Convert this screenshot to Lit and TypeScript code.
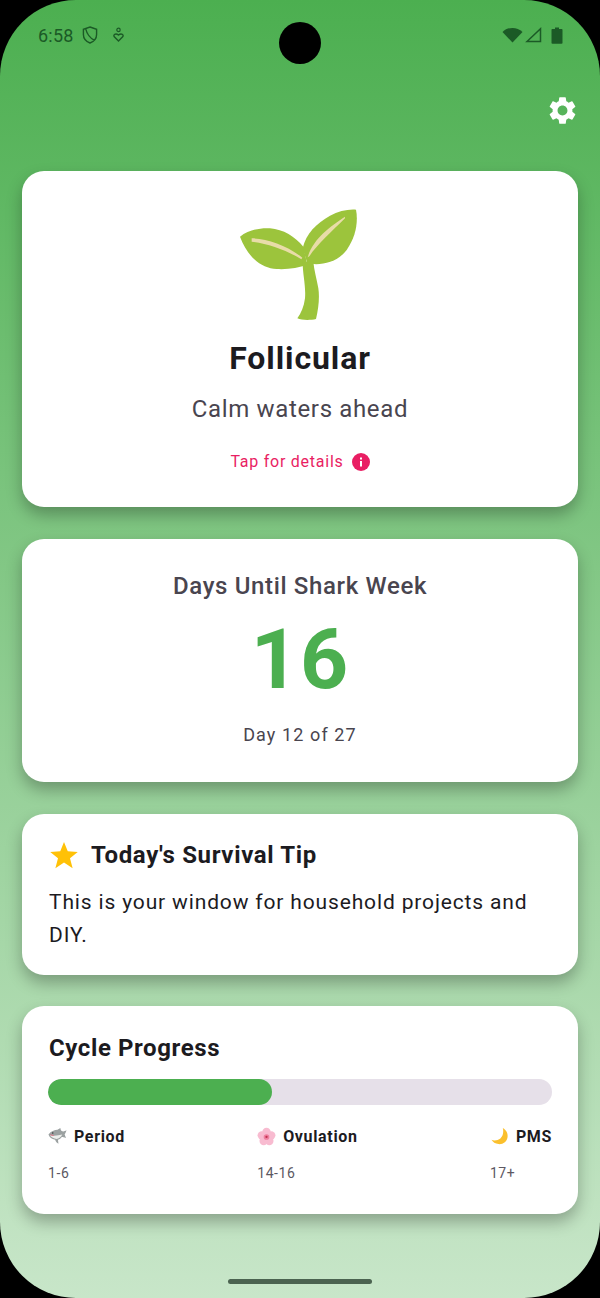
import { LitElement, css, html } from "lit";
import { customElement } from "lit/decorators.js";

const seedling = html`<svg class="seedling" viewBox="57 39 360 336" aria-hidden="true">
  <path fill="#9cc43c" d="M60 125 C85 105 120 98 150 100 C190 103 225 125 250 155 L262 210 C235 218 205 224 170 222 C125 220 85 190 60 125 Z"/>
  <path fill="#9cc43c" d="M248 160 C258 115 290 85 330 62 C355 48 385 42 408 44 C415 80 408 125 380 165 C350 205 300 212 262 205 Z"/>
  <path fill="#9cc43c" d="M248 200 C248 240 258 270 255 310 C252 335 243 355 232 370 C245 376 272 376 288 372 C296 340 299 305 295 280 C290 250 282 225 280 200 Z"/>
  <path fill="#e8dca8" d="M95 130 C140 130 200 150 247 188 L244 193 C200 165 140 145 95 140 Z"/>
  <path fill="#e8dca8" d="M375 65 C330 95 280 130 263 187 L268 184 C290 150 335 110 375 70 Z"/>
</svg>`;

const gear = html`<svg class="gear" viewBox="0 0 24 24" aria-hidden="true">
  <path fill="#fff" d="M19.14 12.94c.04-.3.06-.61.06-.94 0-.32-.02-.64-.07-.94l2.03-1.58a.49.49 0 0 0 .12-.61l-1.92-3.32a.488.488 0 0 0-.59-.22l-2.39.96c-.5-.38-1.03-.7-1.62-.94l-.36-2.54a.484.484 0 0 0-.48-.41h-3.84c-.24 0-.43.17-.47.41l-.36 2.54c-.59.24-1.13.57-1.62.94l-2.39-.96c-.22-.08-.47 0-.59.22L2.74 8.87c-.12.21-.08.47.12.61l2.03 1.58c-.05.3-.09.63-.09.94s.02.64.07.94l-2.03 1.58a.49.49 0 0 0-.12.61l1.92 3.32c.12.22.37.29.59.22l2.39-.96c.5.38 1.03.7 1.62.94l.36 2.54c.05.24.24.41.48.41h3.84c.24 0 .44-.17.47-.41l.36-2.54c.59-.24 1.13-.56 1.62-.94l2.39.96c.22.08.47 0 .59-.22l1.92-3.32c.12-.22.07-.47-.12-.61l-2.01-1.58zM12 15.6c-1.98 0-3.6-1.62-3.6-3.6s1.62-3.6 3.6-3.6 3.6 1.62 3.6 3.6-1.62 3.6-3.6 3.6z"/>
</svg>`;

const shark = html`<svg class="emoji" viewBox="0 0 20 18" aria-hidden="true">
  <path fill="#9ba1a1" d="M0.500 7 C3 3.500 7 2 10 2 L13 0 C13 1.200 13.500 2.200 14 3 C15.500 3.800 17 4 19.500 2.500 C19 4.500 18 6 17.500 7 C18 8.500 18.500 9.500 19 10.500 C17 10 15.500 9.500 14.500 9.500 C13 11.500 11.500 12.300 10.500 12.500 L11 16.500 C9.500 16 8 14.500 7.500 12.500 C4 12 1.500 10 0.500 7 Z"/>
  <path fill="#eceeec" d="M2 7.800 C6 8.500 11 8.200 15 7 C14 9.500 11.500 11.500 9 11.500 C6.500 11.500 3.500 10 2 7.800 Z"/>
  <circle cx="5" cy="5.200" r=".8" fill="#333"/>
  <path fill="none" stroke="#df6d80" stroke-width="1" d="M2.500 7.200 L6 8"/>
</svg>`;

const blossom = html`<svg class="emoji" viewBox="0 0 20 20" aria-hidden="true">
  <g fill="#f8bbd0">
    <circle cx="10" cy="5.200" r="4.400"/>
    <circle cx="15" cy="8.800" r="4.400"/>
    <circle cx="13" cy="14.800" r="4.400"/>
    <circle cx="7" cy="14.800" r="4.400"/>
    <circle cx="5" cy="8.800" r="4.400"/>
  </g>
  <circle cx="10" cy="10.500" r="3" fill="#ee7f9f"/>
  <circle cx="10" cy="10.500" r="1.200" fill="#c2314f"/>
</svg>`;

const moon = html`<svg class="emoji" viewBox="0 0 20 20" aria-hidden="true">
  <path fill="#fbc02d" d="M13.500 1 C17 3 19 6.500 18.500 10.500 C18 15.500 13.500 18.500 9 18 C5.500 17.600 3 16 1.500 13.500 C3 14.200 5.500 14.500 8 13.700 C12.500 12.200 15 7 13.500 1 Z"/>
</svg>`;

@customElement("app-root")
export class AppRoot extends LitElement {
  static styles = css`
    :host {
      display: block;
      width: 600px;
      height: 1298px;
      background: #000;
      font-family: Roboto, "Noto Sans", sans-serif;
      color: #1c1b1f;
    }
    .screen {
      position: relative;
      box-sizing: border-box;
      height: 100%;
      border-radius: 76px;
      overflow: hidden;
      background: linear-gradient(#4caf50 0%, #c8e6c9 100%);
      padding: 0 22px;
    }
    .camera {
      position: absolute;
      left: 279px;
      top: 22px;
      width: 42px;
      height: 42px;
      border-radius: 50%;
      background: #000;
    }
    .status {
      height: 70px;
      display: flex;
      align-items: center;
      justify-content: space-between;
      padding: 0 15px 0 16px;
      color: #1b5a26;
    }
    .status-left,
    .status-right {
      display: flex;
      align-items: center;
    }
    .time {
      font-size: 18px;
      letter-spacing: 0.2px;
      margin-right: 8px;
    }
    .status svg {
      display: block;
    }
    .toolbar {
      height: 101px;
      display: flex;
      justify-content: flex-end;
    }
    .gear {
      width: 33px;
      height: 33px;
      margin: 24px -1px 0 0;
    }
    .cards {
      display: flex;
      flex-direction: column;
      gap: 32px;
    }
    .card {
      box-sizing: border-box;
      background: #fff;
      border-radius: 22px;
      box-shadow: 0 8px 16px rgba(0, 0, 0, 0.28);
    }
    .phase {
      height: 336px;
      display: flex;
      flex-direction: column;
      align-items: center;
      padding-top: 37px;
    }
    .seedling {
      display: block;
      width: 120px;
      height: 112px;
      margin-left: -2px;
    }
    .phase-name {
      margin-top: 18px;
      font-size: 32px;
      line-height: 40px;
      font-weight: 700;
      letter-spacing: 0.9px;
    }
    .phase-sub {
      margin-top: 15px;
      font-size: 24px;
      line-height: 32px;
      letter-spacing: 0.65px;
      color: #49454f;
    }
    .details {
      margin-top: 25px;
      display: flex;
      align-items: center;
      gap: 8px;
      font-size: 16px;
      line-height: 24px;
      letter-spacing: 0.75px;
      color: #e91e63;
    }
    .info {
      width: 18px;
      height: 18px;
      display: block;
    }
    .count {
      height: 243px;
      display: flex;
      flex-direction: column;
      align-items: center;
      padding-top: 31px;
    }
    .count-title {
      font-size: 24px;
      line-height: 32px;
      font-weight: 500;
      letter-spacing: 0.65px;
      color: #49454f;
    }
    .count-num {
      margin-top: 14px;
      font-size: 84px;
      line-height: 88px;
      font-weight: 700;
      letter-spacing: 1px;
      color: #4caf50;
    }
    .count-day {
      margin-top: 19px;
      font-size: 18px;
      line-height: 24px;
      letter-spacing: 1.1px;
      color: #49454f;
    }
    .tip {
      height: 161px;
      padding: 25px 27px 0;
    }
    .tip-head {
      display: flex;
      align-items: center;
      gap: 12px;
      height: 32px;
    }
    .star {
      width: 30px;
      height: 30px;
      display: block;
    }
    .tip-title {
      font-size: 24px;
      line-height: 32px;
      font-weight: 700;
      letter-spacing: 0.65px;
    }
    .tip-text {
      margin: 15px 0 0;
      font-size: 21px;
      line-height: 33px;
      letter-spacing: 0.85px;
    }
    .progress {
      height: 208px;
      padding: 26px 26px 0;
      margin-top: -1px;
    }
    .progress-title {
      font-size: 24px;
      line-height: 32px;
      font-weight: 700;
      letter-spacing: 0.6px;
      margin-left: 1px;
    }
    .track {
      margin-top: 15px;
      height: 26px;
      border-radius: 13px;
      background: #e6e0e9;
      overflow: hidden;
    }
    .fill {
      height: 100%;
      border-radius: 13px;
      background: #4caf50;
    }
    .legend {
      margin-top: 19px;
      display: flex;
      justify-content: space-between;
    }
    .marker-name {
      display: flex;
      align-items: center;
      gap: 7px;
      height: 24px;
      font-size: 16px;
      font-weight: 700;
      letter-spacing: 0.65px;
    }
    .emoji {
      display: block;
      width: 19px;
      height: 19px;
    }
    .marker-range {
      margin-top: 13px;
      font-size: 14px;
      line-height: 24px;
      letter-spacing: 0.6px;
      color: #5c5862;
    }
    .handle {
      position: absolute;
      left: 228px;
      top: 1279px;
      width: 144px;
      height: 5px;
      border-radius: 3px;
      background: #4b6350;
    }
  `;

  render() {
    const markers = [
      { icon: shark, name: "Period", range: "1-6" },
      { icon: blossom, name: "Ovulation", range: "14-16" },
      { icon: moon, name: "PMS", range: "17+" },
    ];
    return html`
      <div class="screen">
        <div class="camera"></div>
        <div class="status">
          <div class="status-left">
            <span class="time">6:58</span>
            <svg width="16" height="18" viewBox="0 0 17 19" aria-hidden="true">
              <path fill="none" stroke="currentColor" stroke-width="1.500" d="M8.500 1 L15.500 3.500 V9 C15.500 13 12.500 16.500 8.500 18 C4.500 16.500 1.500 13 1.500 9 V3.500 Z M4 3 C5 8 9 13 13 15"/>
            </svg>
            <svg style="margin-left:14px" width="13" height="16" viewBox="0 0 14 16" aria-hidden="true">
              <circle cx="7" cy="2.500" r="1.800" fill="none" stroke="currentColor" stroke-width="1.300"/>
              <path fill="none" stroke="currentColor" stroke-width="1.500" d="M7 14.500 L2.500 10 C0.800 7.800 3.800 5.500 7 8 C10.200 5.500 13.200 7.800 11.500 10 Z"/>
            </svg>
          </div>
          <div class="status-right">
            <svg width="21" height="16" viewBox="0 0 21 16" aria-hidden="true">
              <path fill="#1b5a26" d="M0.500 5 C6 -0.500 15 -0.500 20.500 5 L10.500 15.500 Z"/>
            </svg>
            <svg style="margin-left:2px" width="17" height="16" viewBox="0 0 17 16" aria-hidden="true">
              <path fill="none" stroke="#1b5a26" stroke-width="1.500" d="M2 14.500 L15.500 1.800 V14.500 Z"/>
            </svg>
            <svg style="margin-left:9px" width="12" height="17" viewBox="0 0 12 17" aria-hidden="true">
              <path fill="#1b5a26" d="M4 0.500 H8 V2 H10.500 C11.200 2 11.500 2.300 11.500 3 V16 C11.500 16.500 11.200 16.800 10.500 16.800 H1.500 C0.800 16.800 0.500 16.500 0.500 16 V3 C0.500 2.300 0.800 2 1.500 2 H4 Z"/>
            </svg>
          </div>
        </div>
        <div class="toolbar">${gear}</div>
        <div class="cards">
          <section class="card phase">
            ${seedling}
            <div class="phase-name">Follicular</div>
            <div class="phase-sub">Calm waters ahead</div>
            <div class="details">
              <span>Tap for details</span>
              <svg class="info" viewBox="0 0 18 18" aria-hidden="true">
                <circle cx="9" cy="9" r="9" fill="#e91e63"/>
                <rect x="8" y="8" width="2" height="5.500" fill="#fff"/>
                <rect x="8" y="4.500" width="2" height="2" fill="#fff"/>
              </svg>
            </div>
          </section>
          <section class="card count">
            <div class="count-title">Days Until Shark Week</div>
            <div class="count-num">16</div>
            <div class="count-day">Day 12 of 27</div>
          </section>
          <section class="card tip">
            <div class="tip-head">
              <svg class="star" viewBox="0 0 24 24" aria-hidden="true">
                <path fill="#ffc107" d="M12 1.500 L15 9 L23 9.500 L16.800 14.600 L18.900 22.500 L12 18 L5.100 22.500 L7.200 14.600 L1 9.500 L9 9 Z"/>
              </svg>
              <span class="tip-title">Today's Survival Tip</span>
            </div>
            <p class="tip-text">This is your window for household projects and DIY.</p>
          </section>
          <section class="card progress">
            <div class="progress-title">Cycle Progress</div>
            <div class="track"><div class="fill" style="width: ${(12 / 27) * 100}%"></div></div>
            <div class="legend">
              ${markers.map(
                (m) => html`<div>
                  <div class="marker-name">${m.icon}<span>${m.name}</span></div>
                  <div class="marker-range">${m.range}</div>
                </div>`,
              )}
            </div>
          </section>
        </div>
        <div class="handle"></div>
      </div>
    `;
  }
}
